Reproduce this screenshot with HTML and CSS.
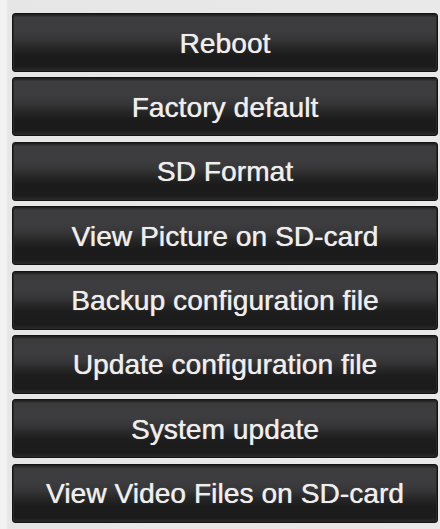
FILE: index.html
```html
<!DOCTYPE html>
<html>
<head>
<meta charset="utf-8">
<link rel="stylesheet" href="styles.css">
</head>
<body>
<div class="menu">
  <button class="btn">Reboot</button>
  <button class="btn">Factory default</button>
  <button class="btn">SD Format</button>
  <button class="btn">View Picture on SD-card</button>
  <button class="btn">Backup configuration file</button>
  <button class="btn">Update configuration file</button>
  <button class="btn">System update</button>
  <button class="btn">View Video Files on SD-card</button>
</div>
</body>
</html>
```
FILE: styles.css
```css
html, body {
  margin: 0;
  padding: 0;
  background: #ebebeb;
}
body {
  width: 440px;
  height: 529px;
  overflow: hidden;
}
.menu {
  display: flex;
  flex-direction: column;
  gap: 5.4px;
  padding: 13px 2px 0 12px;
  background: linear-gradient(to right, #f3f3f3 0, #f3f3f3 6px, #e6e6e6 8px, #e9e9e9 100%);
  height: 529px;
  box-sizing: border-box;
}
.btn {
  display: flex;
  align-items: center;
  justify-content: center;
  height: 59px;
  width: 426px;
  box-sizing: border-box;
  border: 1px solid #141414;
  border-radius: 3px;
  padding: 2px 0 0;
  margin: 0;
  background: linear-gradient(to bottom,
    #1b1b1b 0,
    #3c3c3e 6%,
    #3d3d3f 30%,
    #363638 45%,
    #272728 58%,
    #1c1c1c 72%,
    #1b1b1b 92%,
    #2a2a2a 100%);
  box-shadow: inset 1px 0 0 #2a2a2a, inset -1px 0 0 #2a2a2a;
  color: #eeeeee;
  font-family: "Liberation Sans", Arial, sans-serif;
  font-size: 28px;
  letter-spacing: 0.1px;
  text-shadow: 0 0 1px rgba(255,255,255,0.5), 0.4px 0 0 rgba(238,238,238,0.6);
  cursor: pointer;
}
```
